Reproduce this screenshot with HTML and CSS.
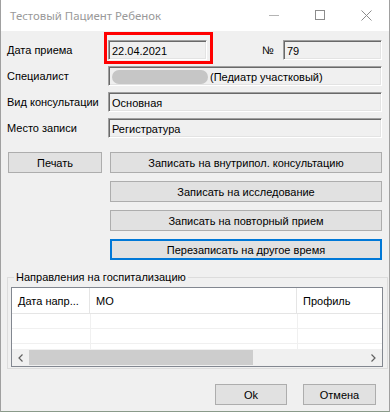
FILE: index.html
```html
<!DOCTYPE html>
<html lang="ru">
<head>
    <meta charset="UTF-8">
    <meta name="viewport" content="width=device-width, initial-scale=1.0">
    <title>Тестовый Пациент Ребенок</title>
    <link rel="stylesheet" href="styles.css">
</head>
<body>
    <div class="window">
        <!-- Title bar -->
        <header class="titlebar">
            <span class="title">Тестовый Пациент Ребенок</span>
            <div class="controls">
                <span class="ctl">
                    <svg width="10" height="10" viewBox="0 0 10 10"><path d="M0 5.5h10" stroke="#b4b4b4" stroke-width="1"/></svg>
                </span>
                <span class="ctl">
                    <svg width="10" height="10" viewBox="0 0 10 10"><rect x="0.5" y="0.5" width="9" height="9" fill="none" stroke="#8c8c8c" stroke-width="1"/></svg>
                </span>
                <span class="ctl">
                    <svg width="11" height="11" viewBox="0 0 11 11"><path d="M0.5 0.5l10 10M10.5 0.5l-10 10" stroke="#8c8c8c" stroke-width="1"/></svg>
                </span>
            </div>
        </header>

        <main class="content">
            <!-- Visit fields -->
            <div class="fields">
                <div class="row">
                    <span class="lbl">Дата приема</span>
                    <div class="field date">22.04.2021</div>
                    <span class="num-lbl">№</span>
                    <div class="field num">79</div>
                </div>
                <div class="row">
                    <span class="lbl">Специалист</span>
                    <div class="field wide"><span class="blur"></span>(Педиатр участковый)</div>
                </div>
                <div class="row">
                    <span class="lbl">Вид консультации</span>
                    <div class="field wide">Основная</div>
                </div>
                <div class="row">
                    <span class="lbl">Место записи</span>
                    <div class="field wide">Регистратура</div>
                </div>
            </div>

            <!-- Actions -->
            <div class="actions">
                <button class="btn print">Печать</button>
                <div class="action-list">
                    <button class="btn">Записать на внутрипол. консультацию</button>
                    <button class="btn">Записать на исследование</button>
                    <button class="btn">Записать на повторный прием</button>
                    <button class="btn focused">Перезаписать на другое время</button>
                </div>
            </div>

            <!-- Hospital referrals -->
            <fieldset class="group">
                <legend>Направления на госпитализацию</legend>
                <div class="listview">
                    <div class="lv-head">
                        <span class="c1">Дата напр...</span>
                        <span class="c2">МО</span>
                        <span class="c3">Профиль</span>
                    </div>
                    <div class="lv-rows">
                        <div class="lv-row"><span class="c1"></span><span class="c2"></span><span class="c3"></span></div>
                        <div class="lv-row"><span class="c1"></span><span class="c2"></span><span class="c3"></span></div>
                        <div class="lv-row"><span class="c1"></span><span class="c2"></span><span class="c3"></span></div>
                    </div>
                    <div class="hscroll">
                        <span class="arrow">
                            <svg width="5" height="8" viewBox="0 0 5 8"><path d="M4.5 0.5l-3.5 3.5 3.5 3.5" fill="none" stroke="#606060" stroke-width="1.2"/></svg>
                        </span>
                        <div class="track"><div class="thumb"></div></div>
                        <span class="arrow">
                            <svg width="5" height="8" viewBox="0 0 5 8"><path d="M0.5 0.5l3.5 3.5-3.5 3.5" fill="none" stroke="#606060" stroke-width="1.2"/></svg>
                        </span>
                    </div>
                </div>
            </fieldset>

            <div class="footer">
                <button class="btn ok">Ok</button>
                <button class="btn cancel">Отмена</button>
            </div>
        </main>

        <!-- Annotation -->
        <div class="highlight"></div>
    </div>
</body>
</html>
```

FILE: styles.css
```css
body {
    margin: 0;
    padding: 0;
    font-family: "Liberation Sans", Arial, sans-serif;
    font-size: 11px;
    color: #000;
    background: #fff;
}

.window {
    position: relative;
    width: 390px;
    height: 412px;
    box-sizing: border-box;
    border-left: 1px solid #a0a0a0;
    border-right: 1px solid #a0a0a0;
    border-bottom: 1px solid #8a9a8a;
    display: flex;
    flex-direction: column;
}

.titlebar {
    height: 31px;
    flex: none;
    display: flex;
    align-items: center;
    background: #fff;
}

.title {
    font-family: "Noto Sans", sans-serif;
    font-size: 11.4px;
    color: #999;
    padding-left: 9px;
    flex: 1;
    margin-top: -1px;
}

.controls {
    display: flex;
    height: 30px;
    align-self: flex-start;
}

.ctl {
    width: 46px;
    display: flex;
    align-items: center;
    justify-content: center;
}

.content {
    flex: 1;
    background: #f0f0f0;
    padding: 9px 0 0 6px;
}

/* Fields */

.fields {
    display: flex;
    flex-direction: column;
    gap: 6px;
}

.row {
    display: flex;
    align-items: center;
    height: 20px;
}

.lbl {
    width: 101px;
}

.field {
    height: 20px;
    box-sizing: border-box;
    border: 1px solid;
    border-color: #a0a0a0 #fff #fff #a0a0a0;
    box-shadow: inset 1px 1px 0 #696969, inset -1px -1px 0 #e3e3e3;
    padding: 1px 0 0 3px;
    display: flex;
    align-items: center;
    white-space: nowrap;
}

.field.date {
    width: 99px;
}

.num-lbl {
    width: 21px;
    margin-left: 55px;
}

.field.num {
    width: 99px;
}

.field.wide {
    width: 274px;
}

.blur {
    display: inline-block;
    width: 96px;
    height: 14px;
    border-radius: 7px;
    background: #c6c6c6;
    margin-right: 2px;
}

/* Buttons */

.btn {
    font-family: "Liberation Sans", Arial, sans-serif;
    font-size: 11px;
    color: #000;
    background: #e1e1e1;
    border: 1px solid #adadad;
    height: 21px;
    padding: 0;
    margin: 0;
    box-sizing: border-box;
}

.btn.focused {
    border: 2px solid #0078d7;
}

.actions {
    display: flex;
    align-items: flex-start;
    margin-top: 14px;
    gap: 8px;
}

.btn.print {
    width: 94px;
    margin-left: 1px;
}

.action-list {
    display: flex;
    flex-direction: column;
    gap: 8px;
    width: 272px;
}

/* Group box */

.group {
    width: 381px;
    box-sizing: border-box;
    margin: 11px 0 0 0;
    padding: 3px 3px 1px 3px;
    border: 1px solid #dcdcdc;
    min-width: 0;
}

.group legend {
    padding: 0 2px;
    margin-left: 3px;
    line-height: 13px;
}

.listview {
    width: 372px;
    height: 80px;
    box-sizing: border-box;
    border: 1px solid #828790;
    background: #fff;
    display: flex;
    flex-direction: column;
    overflow: hidden;
}

.lv-head {
    display: flex;
    height: 26px;
    flex: none;
    box-sizing: border-box;
    border-bottom: 1px solid #e5e5e5;
}

.lv-head span {
    display: flex;
    align-items: center;
    padding-left: 6px;
    box-sizing: border-box;
    border-right: 1px solid #e5e5e5;
    white-space: nowrap;
}

.c1 {
    width: 78px;
    flex: none;
    box-sizing: border-box;
}

.c2 {
    width: 207px;
    flex: none;
    box-sizing: border-box;
}

.c3 {
    flex: 1;
}

.lv-head .c3 {
    border-right: none;
}

.lv-rows {
    flex: 1;
    overflow: hidden;
}

.lv-row {
    display: flex;
    height: 15px;
    box-sizing: border-box;
    border-bottom: 1px solid #f0f0f0;
}

.lv-row span {
    border-right: 1px solid #f0f0f0;
}

.lv-row .c1 {
    width: 79px;
}

.lv-row .c3 {
    border-right: none;
}

.hscroll {
    height: 17px;
    flex: none;
    display: flex;
    background: #f0f0f0;
}

.hscroll .arrow {
    width: 17px;
    display: flex;
    align-items: center;
    justify-content: center;
}

.track {
    flex: 1;
    display: flex;
    align-items: center;
}

.thumb {
    width: 224px;
    height: 15px;
    background: #cdcdcd;
}

/* Footer */

.footer {
    display: flex;
    justify-content: flex-end;
    gap: 16px;
    margin: 15px 13px 0 0;
}

.btn.ok {
    width: 72px;
}

.btn.cancel {
    width: 73px;
}

/* Red annotation frame over the date */

.highlight {
    position: absolute;
    left: 103px;
    top: 32px;
    width: 109px;
    height: 32px;
    box-sizing: border-box;
    border: 3px solid #ff0000;
}
```
